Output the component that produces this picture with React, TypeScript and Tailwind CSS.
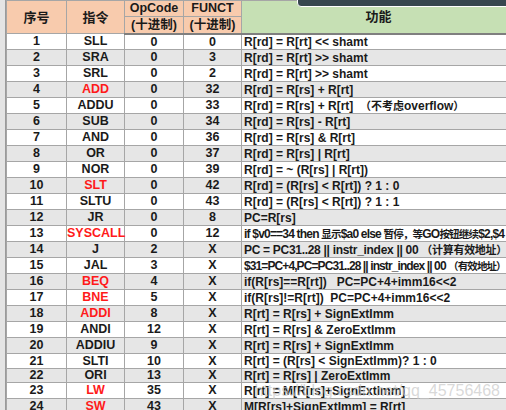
import React from "react";

type Row = { no: number; ins: string; op: string; fn: string; desc: string; red?: boolean; h?: string; tr?: string; cjk?: string };

const rows: Row[] = [
  { no: 1, ins: "SLL", op: "0", fn: "0", desc: "R[rd] = R[rt] << shamt" },
  { no: 2, ins: "SRA", op: "0", fn: "3", desc: "R[rd] = R[rt] >> shamt" },
  { no: 3, ins: "SRL", op: "0", fn: "2", desc: "R[rd] = R[rt] >> shamt" },
  { no: 4, ins: "ADD", op: "0", fn: "32", desc: "R[rd] = R[rs] + R[rt]", red: true },
  { no: 5, ins: "ADDU", op: "0", fn: "33", desc: "R[rd] = R[rs] + R[rt]\u00a0\u00a0（不考虑overflow）" },
  { no: 6, ins: "SUB", op: "0", fn: "34", desc: "R[rd] = R[rs] - R[rt]" },
  { no: 7, ins: "AND", op: "0", fn: "36", desc: "R[rd] = R[rs] & R[rt]" },
  { no: 8, ins: "OR", op: "0", fn: "37", desc: "R[rd] = R[rs] | R[rt]" },
  { no: 9, ins: "NOR", op: "0", fn: "39", desc: "R[rd] = ~ (R[rs] | R[rt])" },
  { no: 10, ins: "SLT", op: "0", fn: "42", desc: "R[rd] = (R[rs] < R[rt]) ? 1 : 0", red: true },
  { no: 11, ins: "SLTU", op: "0", fn: "43", desc: "R[rd] = (R[rs] < R[rt]) ? 1 : 1" },
  { no: 12, ins: "JR", op: "0", fn: "8", desc: "PC=R[rs]" },
  { no: 13, ins: "SYSCALL", op: "0", fn: "12", desc: "if $v0==34 then 显示$a0 else 暂停，等GO按钮继续$2,$4", red: true, tr: "tracking-[-0.8px]", cjk: "text-[10.5px]" },
  { no: 14, ins: "J", op: "2", fn: "X", desc: "PC = PC31..28 || instr_index || 00 （计算有效地址）", tr: "tracking-[-0.3px]" },
  { no: 15, ins: "JAL", op: "3", fn: "X", desc: "$31=PC+4,PC=PC31..28 || instr_index || 00 （有效地址）", tr: "tracking-[-0.9px]", cjk: "text-[10.5px]" },
  { no: 16, ins: "BEQ", op: "4", fn: "X", desc: "if(R[rs]==R[rt])\u00a0\u00a0\u00a0PC=PC+4+imm16<<2", red: true },
  { no: 17, ins: "BNE", op: "5", fn: "X", desc: "if(R[rs]!=R[rt])\u00a0\u00a0PC=PC+4+imm16<<2", red: true },
  { no: 18, ins: "ADDI", op: "8", fn: "X", desc: "R[rt] = R[rs] + SignExtImm", red: true },
  { no: 19, ins: "ANDI", op: "12", fn: "X", desc: "R[rt] = R[rs] & ZeroExtImm" },
  { no: 20, ins: "ADDIU", op: "9", fn: "X", desc: "R[rt] = R[rs] + SignExtImm" },
  { no: 21, ins: "SLTI", op: "10", fn: "X", desc: "R[rt] = (R[rs] < SignExtImm)? 1 : 0", h: "h-[15px]" },
  { no: 22, ins: "ORI", op: "13", fn: "X", desc: "R[rt] = R[rs] | ZeroExtImm", h: "h-[14px]" },
  { no: 23, ins: "LW", op: "35", fn: "X", desc: "R[rt] = M[R[rs]+SignExtImm]", red: true },
  { no: 24, ins: "SW", op: "43", fn: "X", desc: "M[R[rs]+SignExtImm] = R[rt]", red: true },
];

// Chinese runs get a slightly smaller size so they sit like the sheet's glyphs
function Desc({ text, cjk }: { text: string; cjk?: string }) {
  const parts = text.split(/([\u3000-\u9fff\uff00-\uffef]+)/);
  return (
    <>
      {parts.map((p, i) =>
        i % 2 === 1 ? (
          <span key={i} className={cjk ?? "text-[11px]"}>{p}</span>
        ) : (
          <React.Fragment key={i}>{p}</React.Fragment>
        )
      )}
    </>
  );
}

export default function App() {
  return (
    <div className="relative flex w-[506px] h-[410px] overflow-hidden bg-white font-['Liberation_Sans','Noto_Sans_CJK_SC',sans-serif] font-bold text-[12.5px] text-[#1a1a1a]">
      <div className="w-[6px] shrink-0 bg-[#e4e4e4] border-r border-[#9a9a9a]" />
      <table className="border-collapse table-fixed w-[560px] shrink-0">
        <colgroup>
          <col className="w-[60px]" />
          <col className="w-[58px]" />
          <col className="w-[59px]" />
          <col className="w-[58px]" />
          <col />
        </colgroup>
        <thead>
          <tr className="h-[16px]">
            <th rowSpan={2} className="bg-[#f8cbad] border border-[#a6a6a6] text-[13px] leading-none">序号</th>
            <th rowSpan={2} className="bg-[#f8cbad] border border-[#a6a6a6] text-[13px] leading-none">指令</th>
            <th className="bg-[#f8cbad] border border-[#a6a6a6] leading-none">OpCode</th>
            <th className="bg-[#f8cbad] border border-[#a6a6a6] leading-none">FUNCT</th>
            <th rowSpan={2} className="bg-[#c6e0b4] border border-[#a6a6a6] border-b-2 border-b-[#7f7f7f] text-[13px] leading-none pr-[50px]">功能</th>
          </tr>
          <tr className="h-[17px]">
            <th className="bg-[#f8cbad] border border-[#a6a6a6] border-b-2 border-b-[#7f7f7f] leading-none">(十进制)</th>
            <th className="bg-[#f8cbad] border border-[#a6a6a6] border-b-2 border-b-[#7f7f7f] leading-none">(十进制)</th>
          </tr>
        </thead>
        <tbody>
          {rows.map((r) => (
            <tr key={r.no} className={`${r.h ?? "h-[16px]"} ${r.no % 2 === 0 ? "bg-[#e6e6e6]" : "bg-white"}`}>
              <td className="border border-[#a6a6a6] text-center leading-none">{r.no}</td>
              <td className={`border border-[#a6a6a6] text-center leading-none ${r.red ? "text-[#ff1a1a]" : ""}`}>{r.ins}</td>
              <td className="border border-[#a6a6a6] text-center leading-none">{r.op}</td>
              <td className="border border-[#a6a6a6] text-center leading-none">{r.fn}</td>
              <td className={`border border-[#a6a6a6] pl-[2px] leading-none whitespace-nowrap text-[12px] ${r.tr ?? ""}`}>
                <Desc text={r.desc} cjk={r.cjk} />
              </td>
            </tr>
          ))}
        </tbody>
      </table>

      <div className="absolute left-[297px] -top-[2px] w-[220px] h-[9px] bg-[#37474f] rounded-bl-[4px] border border-white" />
      <div className="absolute right-[6px] top-[379px] text-[16px] font-normal text-[#c8c8c8]/70 font-['Liberation_Sans',sans-serif] whitespace-nowrap">
        https://blog.csdn.net/qq_45756468
      </div>
    </div>
  );
}
